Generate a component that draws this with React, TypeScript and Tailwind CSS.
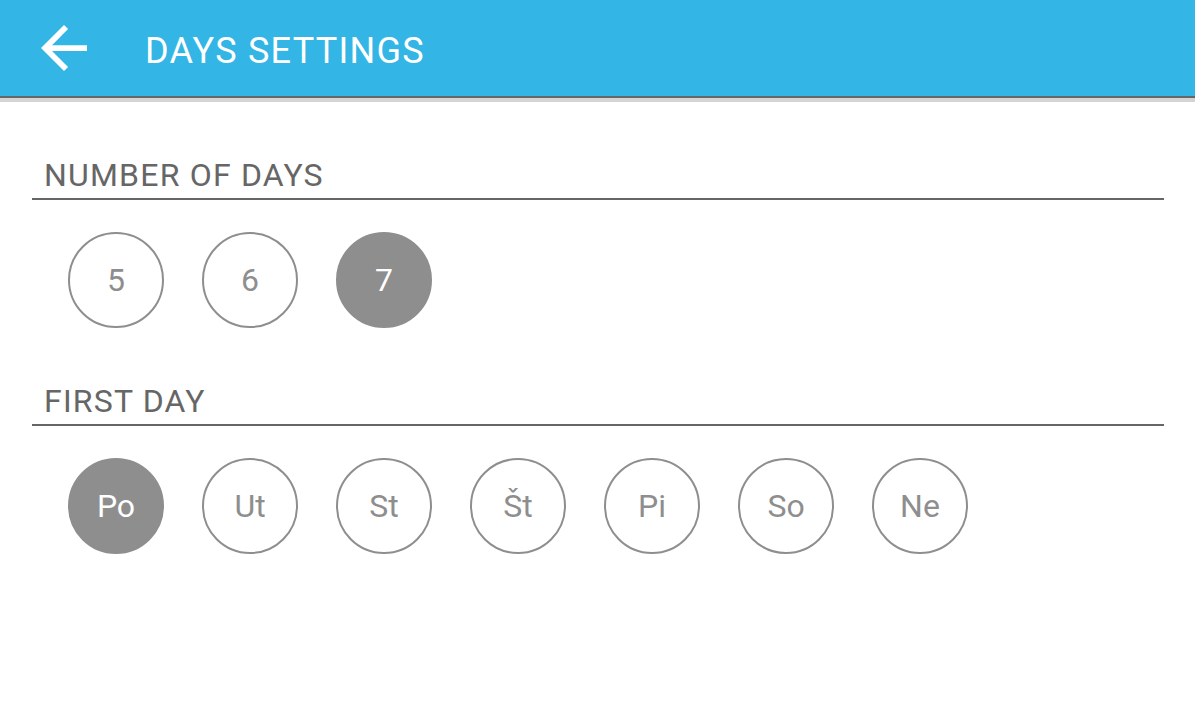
const DAY_COUNTS = ['5', '6', '7']
const DAYS = ['Po', 'Ut', 'St', 'Št', 'Pi', 'So', 'Ne']

function Choice({ label, selected }: { label: string; selected: boolean }) {
  return (
    <div
      className={
        selected
          ? 'w-[96px] h-[96px] rounded-full bg-[#8e8e8e] border-2 border-[#8e8e8e] flex items-center justify-center text-white text-[32px]'
          : 'w-[96px] h-[96px] rounded-full bg-white border-2 border-[#8e8e8e] flex items-center justify-center text-[#8e8e8e] text-[32px]'
      }
    >
      {label}
    </div>
  )
}

function Section({ title, items, selected }: { title: string; items: string[]; selected: string }) {
  return (
    <div className="pt-[55px]">
      <div className="pl-[12px] pb-[5px] text-[32px] leading-[36px] tracking-[1.2px] text-[#666666]">{title}</div>
      <div className="h-[2px] bg-[#666666]" />
      <div className="flex gap-[38px] pl-[36px] pt-[32px]">
        {items.map((it) => (
          <Choice key={it} label={it} selected={it === selected} />
        ))}
      </div>
    </div>
  )
}

export default function App() {
  return (
    <div className="w-[1195px] h-[720px] bg-white overflow-hidden" style={{ fontFamily: 'Roboto, "Liberation Sans", sans-serif' }}>
      <div className="h-[96px] bg-[#33b5e5] flex items-start">
        <svg className="ml-[41px] mt-[25px]" width="46" height="46" viewBox="4 4 16 16" fill="white">
          <path d="M20 11H7.83l5.59-5.59L12 4l-8 8 8 8 1.41-1.41L7.83 13H20v-2z" />
        </svg>
        <div className="ml-[58px] mt-[33px] text-[36px] leading-[36px] tracking-[1.25px] text-white">DAYS SETTINGS</div>
      </div>
      <div className="h-[2px] bg-[#666666]" />
      <div className="h-[4px] bg-[#d4d4d4]" />
      <div className="pl-[32px] pr-[31px]">
        <Section title="NUMBER OF DAYS" items={DAY_COUNTS} selected="7" />
        <Section title="FIRST DAY" items={DAYS} selected="Po" />
      </div>
    </div>
  )
}
